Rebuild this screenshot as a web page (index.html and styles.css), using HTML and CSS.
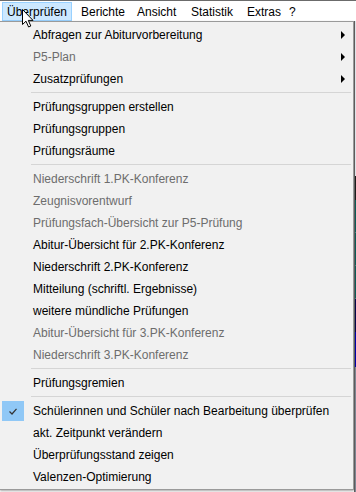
FILE: index.html
```html
<!DOCTYPE html>
<html lang="de">
<head>
    <meta charset="UTF-8">
    <title>Überprüfen</title>
    <link rel="stylesheet" href="styles.css">
</head>
<body>
    <div class="menubar">
        <span class="mb-item active">Überprüfen</span>
        <span class="mb-item">Berichte</span>
        <span class="mb-item">Ansicht</span>
        <span class="mb-item">Statistik</span>
        <span class="mb-item">Extras</span>
        <span class="mb-item">?</span>
    </div>

    <div class="workarea">
        <div class="dropdown">
            <div class="item"><span class="gutter"></span><span class="label">Abfragen zur Abiturvorbereitung</span><span class="arrow"></span></div>
            <div class="item disabled"><span class="gutter"></span><span class="label">P5-Plan</span><span class="arrow"></span></div>
            <div class="item"><span class="gutter"></span><span class="label">Zusatzprüfungen</span><span class="arrow"></span></div>
            <div class="sep"></div>
            <div class="item"><span class="gutter"></span><span class="label">Prüfungsgruppen erstellen</span></div>
            <div class="item"><span class="gutter"></span><span class="label">Prüfungsgruppen</span></div>
            <div class="item"><span class="gutter"></span><span class="label">Prüfungsräume</span></div>
            <div class="sep"></div>
            <div class="item disabled"><span class="gutter"></span><span class="label">Niederschrift 1.PK-Konferenz</span></div>
            <div class="item disabled"><span class="gutter"></span><span class="label">Zeugnisvorentwurf</span></div>
            <div class="item disabled"><span class="gutter"></span><span class="label">Prüfungsfach-Übersicht zur P5-Prüfung</span></div>
            <div class="item"><span class="gutter"></span><span class="label">Abitur-Übersicht für 2.PK-Konferenz</span></div>
            <div class="item"><span class="gutter"></span><span class="label">Niederschrift 2.PK-Konferenz</span></div>
            <div class="item"><span class="gutter"></span><span class="label">Mitteilung (schriftl. Ergebnisse)</span></div>
            <div class="item"><span class="gutter"></span><span class="label">weitere mündliche Prüfungen</span></div>
            <div class="item disabled"><span class="gutter"></span><span class="label">Abitur-Übersicht für 3.PK-Konferenz</span></div>
            <div class="item disabled"><span class="gutter"></span><span class="label">Niederschrift 3.PK-Konferenz</span></div>
            <div class="sep"></div>
            <div class="item"><span class="gutter"></span><span class="label">Prüfungsgremien</span></div>
            <div class="sep"></div>
            <div class="item">
                <span class="gutter checked">
                    <svg width="8" height="7" viewBox="0 0 8 7"><path d="M0.5 3.5 L3 6 L7.5 0.8" fill="none" stroke="#333" stroke-width="1.2"/></svg>
                </span>
                <span class="label">Schülerinnen und Schüler nach Bearbeitung überprüfen</span>
            </div>
            <div class="item"><span class="gutter"></span><span class="label">akt. Zeitpunkt verändern</span></div>
            <div class="item"><span class="gutter"></span><span class="label">Überprüfungsstand zeigen</span></div>
            <div class="item"><span class="gutter"></span><span class="label">Valenzen-Optimierung</span></div>
        </div>

        <!-- bit of the window behind the menu -->
        <div class="app-edge">
            <div class="edge-light"></div>
            <div class="edge-dark"></div>
            <div class="edge-teal"></div>
            <div class="edge-teal"></div>
            <div class="edge-teal"></div>
            <div class="edge-navy"></div>
            <div class="edge-blue"></div>
            <div class="edge-grey"></div>
        </div>
    </div>

    <svg class="cursor" width="13" height="19" viewBox="0 0 13 19">
        <path d="M0.5 0.5 L0.5 15.5 L4 12.2 L6.6 18 L8.8 17 L6.3 11.4 L11 11.4 Z" fill="#fff" stroke="#000" stroke-width="1" stroke-linejoin="miter"/>
    </svg>
</body>
</html>
```

FILE: styles.css
```css
body {
    margin: 0;
    background-color: #fff;
    font-family: "Liberation Sans", Arial, sans-serif;
    font-size: 12px;
    color: #000;
    width: 356px;
    height: 492px;
    overflow: hidden;
    position: relative;
}

.menubar {
    display: grid;
    grid-template-columns: 74px 56px 54px 56px 42px auto;
    height: 20px;
    padding: 1px 0 0 2px;
    border-top: 1px solid #6b6b6b;
    background-color: #fff;
    box-sizing: border-box;
    height: 21px;
}

.mb-item {
    justify-self: start;
    padding: 0 4px;
    height: 19px;
    line-height: 18px;
    border: 1px solid transparent;
    box-sizing: border-box;
}

.mb-item.active {
    background-color: #cce8ff;
    border-color: #99d1ff;
}

.workarea {
    display: flex;
    align-items: flex-start;
}

.dropdown {
    width: 354px;
    padding: 2px 0 1px 0;
    background-color: #f1f1f1;
    border: 1px solid #9a9a9a;
    border-left: none;
    box-sizing: border-box;
    box-shadow: 0 1px 2px rgba(0, 0, 0, 0.35);
}

.item {
    display: flex;
    align-items: center;
    height: 22px;
    padding-left: 2px;
}

.item.disabled {
    color: #6d6d6d;
}

.gutter {
    display: flex;
    align-items: center;
    justify-content: center;
    width: 22px;
    height: 20px;
    margin-right: 9px;
}

.gutter.checked {
    background-color: #90c8f6;
}

.label {
    white-space: nowrap;
    line-height: 22px;
}

.arrow {
    margin-left: auto;
    margin-right: 8px;
    width: 0;
    height: 0;
    border-left: 4px solid #000;
    border-top: 4px solid transparent;
    border-bottom: 4px solid transparent;
}

.sep {
    height: 1px;
    margin: 2px 2px 3px 31px;
    background-color: #d5d5d5;
}

.app-edge {
    display: flex;
    flex-direction: column;
    width: 2px;
    height: 471px;
    border-left: 1px solid #5c5c5c;
    box-sizing: content-box;
    width: 1px;
}

.edge-light {
    height: 155px;
    background-color: #dfe3e8;
}

.edge-dark {
    height: 24px;
    background-color: #1b1b1b;
}

.edge-teal {
    height: 32px;
    border-bottom: 1px solid #3f7f7a;
    background-color: #0b5c55;
}

.edge-navy {
    height: 33px;
    background-color: #050548;
}

.edge-blue {
    height: 35px;
    background-color: #0000a8;
}

.edge-grey {
    flex: 1;
    background-color: #7d8591;
}

.cursor {
    position: absolute;
    left: 22px;
    top: 9px;
}
```
